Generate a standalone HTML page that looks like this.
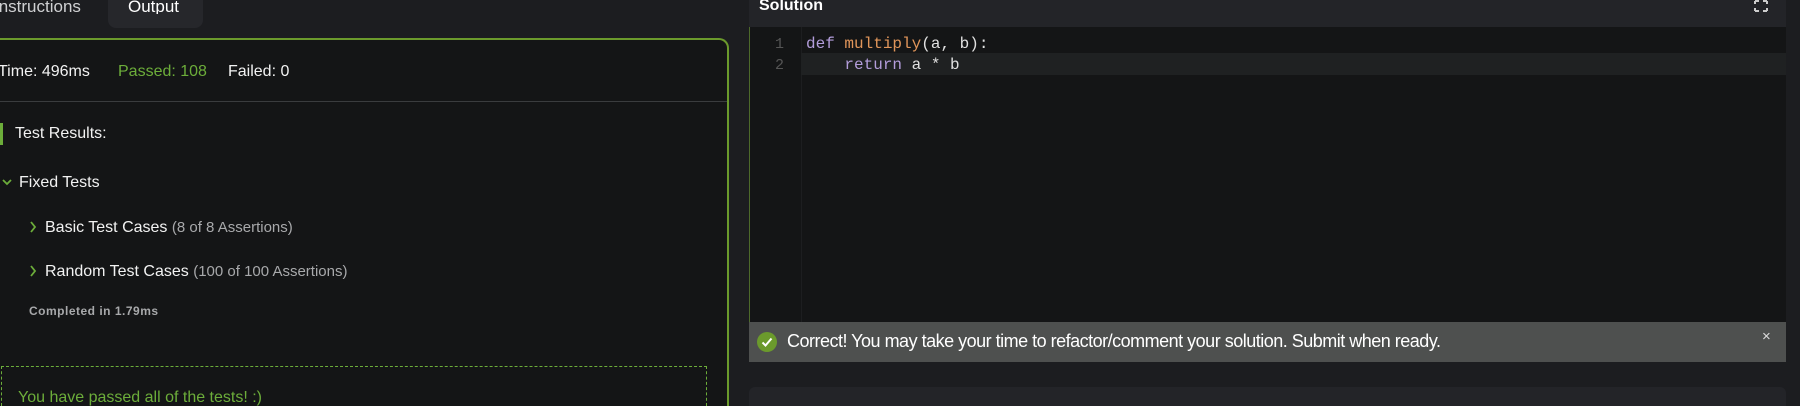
<!DOCTYPE html>
<html style="overflow:hidden;height:406px"><head><style>
*{margin:0;padding:0;box-sizing:border-box}
body{width:1800px;height:406px;background:#1c1d20;overflow:hidden;font-family:"Liberation Sans",sans-serif;color:#e8e8e8}
#w{position:relative;width:1800px;height:406px;overflow:hidden}
.abs{position:absolute;white-space:pre}
</style></head><body><div id="w">
<div class="abs" style="left:0;top:0;font-size:17px;line-height:14px;height:14px;overflow:hidden;color:#cfd0d2;text-indent:-6px">Instructions</div>
<div class="abs" style="left:108px;top:0;width:95px;height:28px;background:#26272b;border-radius:0 0 8px 8px"></div>
<div class="abs" style="left:128px;top:0;font-size:17px;line-height:14px;height:14px;overflow:hidden;color:#fff">Output</div>
<div class="abs" style="left:0;top:38px;width:729px;height:368px;background:#141516;border-top:2px solid #6b9a2c;border-right:2px solid #6b9a2c;border-radius:0 10px 0 0"></div>
<div class="abs" style="left:0;top:101px;width:727px;height:1px;background:#3a3c3e"></div>
<div class="abs" style="left:0;top:63px;font-size:16px;color:#f2f2f2;text-indent:-2px">Time: 496ms</div>
<div class="abs" style="left:118px;top:63px;font-size:16px;color:#6cad3a">Passed: 108</div>
<div class="abs" style="left:228px;top:63px;font-size:16px;color:#f2f2f2">Failed: 0</div>
<div class="abs" style="left:0;top:123px;width:3px;height:22px;background:#6cad3a"></div>
<div class="abs" style="left:15px;top:125px;font-size:16px;color:#f2f2f2">Test Results:</div>
<svg class="abs" style="left:2px;top:177px" width="10" height="10"><path d="M1 3 L5 7 L9 3" stroke="#6cad3a" stroke-width="1.8" fill="none"/></svg>
<div class="abs" style="left:19px;top:174px;font-size:16px;color:#f2f2f2">Fixed Tests</div>
<svg class="abs" style="left:28px;top:221px" width="10" height="12"><path d="M3 1 L7 6 L3 11" stroke="#6cad3a" stroke-width="1.8" fill="none"/></svg>
<div class="abs" style="left:45px;top:219px;font-size:16px;color:#f2f2f2">Basic Test Cases <span style="font-size:15px;color:#a8a9ab">(8 of 8 Assertions)</span></div>
<svg class="abs" style="left:28px;top:265px" width="10" height="12"><path d="M3 1 L7 6 L3 11" stroke="#6cad3a" stroke-width="1.8" fill="none"/></svg>
<div class="abs" style="left:45px;top:263px;font-size:16px;color:#f2f2f2">Random Test Cases <span style="font-size:15px;color:#a8a9ab">(100 of 100 Assertions)</span></div>
<div class="abs" style="left:29px;top:304px;font-size:12px;font-weight:bold;color:#a8a9ab;letter-spacing:.5px">Completed in 1.79ms</div>
<div class="abs" style="left:1px;top:366px;width:706px;height:40px;border:1px dashed #6cad3a;border-bottom:none"></div>
<div class="abs" style="left:18px;top:390px;font-size:16px;line-height:16px;height:16px;overflow:hidden;color:#6cad3a">You have passed all of the tests! :)</div>
<div class="abs" style="left:749px;top:0;width:1037px;height:27px;background:#232428"></div>
<div class="abs" style="left:759px;top:0;font-size:16px;line-height:12px;height:12px;overflow:hidden;font-weight:bold;color:#fff">Solution</div>
<svg class="abs" style="left:1754px;top:0" width="14" height="12"><path d="M1 1h4M1 1v3M13 1h-4M13 1v3M1 11h4M1 11v-3M13 11h-4M13 11v-3" stroke="#ccc" stroke-width="2" fill="none"/></svg>
<div class="abs" style="left:749px;top:27px;width:1037px;height:335px;background:#141516;border-left:1px solid #4d6a2a"></div>
<div class="abs" style="left:801px;top:27px;width:1px;height:295px;background:#1d1e20"></div>
<div class="abs" style="left:801px;top:53px;width:985px;height:22px;background:#1f2122"></div>
<div class="abs" style="left:775px;top:34px;font-family:'Liberation Mono',monospace;font-size:15px;line-height:21px;color:#555">1
2</div>
<div class="abs" style="left:806px;top:34px;font-family:'Liberation Mono',monospace;font-size:16px;line-height:21px;color:#e0e0e0"><span style="color:#b39ddb">def</span> <span style="color:#e0955a">multiply</span>(a, b):
    <span style="color:#b39ddb">return</span> a * b</div>
<div class="abs" style="left:749px;top:322px;width:1037px;height:40px;background:#4e504f"></div>
<div class="abs" style="left:757px;top:332px;width:20px;height:20px;border-radius:50%;background:#6b9a2c"></div>
<svg class="abs" style="left:757px;top:332px" width="20" height="20"><path d="M5.5 10.5 L8.5 13.5 L14.5 6.5" stroke="#fff" stroke-width="2" fill="none"/></svg>
<div class="abs" style="left:787px;top:331px;font-size:18px;letter-spacing:-0.5px;color:#fff">Correct! You may take your time to refactor/comment your solution. Submit when ready.</div>
<div class="abs" style="left:1762px;top:328px;font-size:15px;color:#ddd">×</div>
<div class="abs" style="left:749px;top:387px;width:1037px;height:19px;background:#232428;border-radius:6px 6px 0 0"></div>
<div class="abs" style="left:1786px;top:0;width:14px;height:406px;background:#1c1d20"></div>
</div></body></html>
